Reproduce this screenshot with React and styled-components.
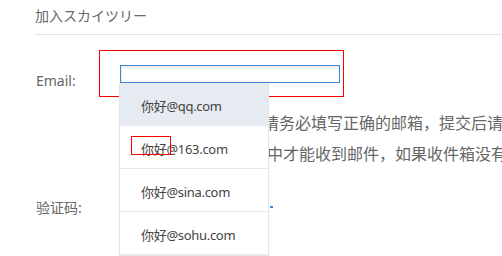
import React from "react";
import styled, { createGlobalStyle } from "styled-components";

const Global = createGlobalStyle`
  html, body { margin: 0; padding: 0; background: #fff; }
  body {
    width: 502px; height: 256px; overflow: hidden;
    font-family: "Noto Sans", "Noto Sans CJK SC", sans-serif;
  }
`;

const Page = styled.div`
  position: relative;
  padding-left: 35px;
  height: 256px;
  overflow: hidden;
`;

const Header = styled.div`
  height: 35px;
  border-bottom: 1px solid #e3e3e3;
  box-sizing: border-box;
  padding-top: 6px;
  font-size: 14px;
  line-height: 20px;
  color: #666;
`;

const Row = styled.div`
  display: flex;
  align-items: flex-start;
  margin-top: ${(p) => p.$top}px;
`;

const Label = styled.div`
  width: 63px;
  padding-left: 1px;
  margin-top: ${(p) => p.$offset}px;
  font-size: 14px;
  line-height: 20px;
  color: #666;
  white-space: nowrap;
`;

const Highlight = styled.div`
  border: 1px solid rgb(255, 0, 0);
  padding: 14px 3px 13px 20px;
  width: 220px;
`;

const Input = styled.input`
  display: block;
  box-sizing: border-box;
  width: 220px;
  height: 18px;
  margin: 0;
  padding: 0 4px;
  border: 1px solid #3b86d8;
  outline: none;
  box-shadow: inset 1px 2px 2px rgba(0, 0, 0, 0.08);
  background: #fff;
`;

const Hint = styled.div`
  margin-left: 84px;
  margin-top: 10px;
  font-family: "Noto Sans CJK SC", sans-serif;
  font-size: 16px;
  line-height: 31px;
  color: #666;
  white-space: nowrap;
`;

const HintLine = styled.div`
  padding-left: ${(p) => p.$offset}px;
`;

const Mark = styled.span`
  display: block;
  width: 3px;
  height: 2px;
  margin-left: 171px;
  margin-top: 15px;
  background: #3b86d8;
`;

const Dropdown = styled.ul`
  position: absolute;
  left: 119px;
  top: 83px;
  width: 150px;
  box-sizing: border-box;
  margin: 0;
  padding: 0;
  list-style: none;
  background: #fff;
  border: 1px solid #e6e6e6;
  border-top: none;
`;

const Item = styled.li`
  position: relative;
  height: 42px;
  border-bottom: 1px solid #e8e8e8;
  padding-left: 21px;
  font-size: 13px;
  letter-spacing: -0.3px;
  line-height: 46px;
  color: #444;
  background: ${(p) => (p.$active ? "#e5ebf1" : "#fff")};
  border-bottom-color: ${(p) => (p.$active ? "#e5ebf1" : "#e8e8e8")};
`;

const Mark2 = styled.span`
  position: absolute;
  left: 11px;
  top: 10px;
  width: 38px;
  height: 17px;
  border: 1px solid rgb(255, 0, 0);
`;

const items = ["你好@qq.com", "你好@163.com", "你好@sina.com", "你好@sohu.com"];

export default function App() {
  return (
    <>
      <Global />
      <Page>
        <Header>加入スカイツリー</Header>
        <Row $top={15}>
          <Label $offset={21}>Email:</Label>
          <Highlight>
            <Input type="text" />
          </Highlight>
        </Row>
        <Hint>
          <HintLine $offset={0}>邮箱即为登录帐号，请务必填写正确的邮箱，提交后请到邮箱激活</HintLine>
          <HintLine $offset={4}>激活账号，在收件箱中才能收到邮件，如果收件箱没有收到请查看垃圾箱</HintLine>
        </Hint>
        <Row $top={22}>
          <Label $offset={7}>验证码:</Label>
          <Mark />
        </Row>
        <Dropdown>
          {items.map((t, i) => (
            <Item key={t} $active={i === 0}>
              {t}
              {i === 1 && <Mark2 />}
            </Item>
          ))}
        </Dropdown>
      </Page>
    </>
  );
}
